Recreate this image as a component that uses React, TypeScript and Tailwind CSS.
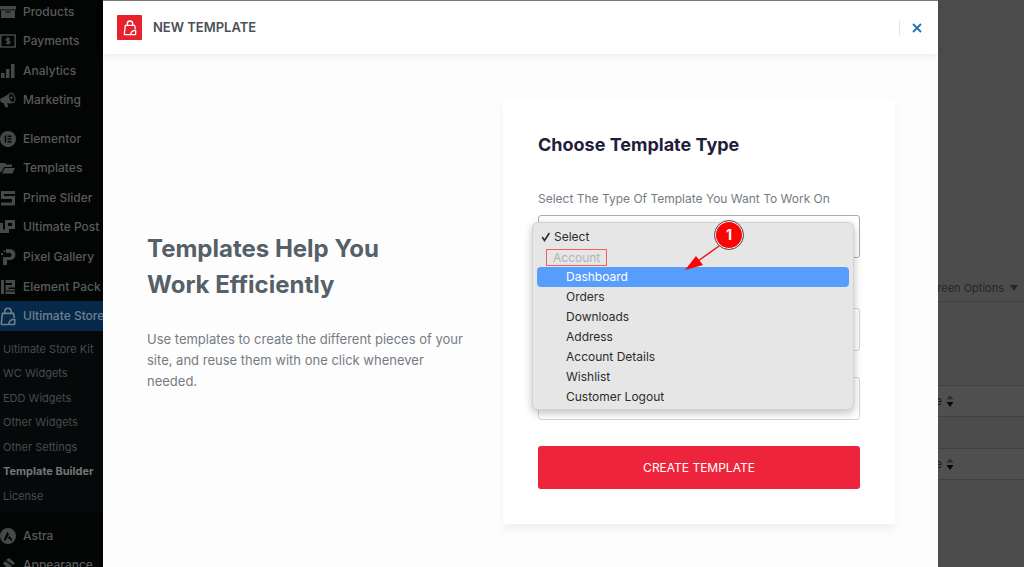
import React, { useState } from "react";
import clsx from "clsx";

type IconProps = { className?: string };

const BagIcon = ({ className }: IconProps) => (
  <svg viewBox="0 0 20 24" className={className} fill="none" stroke="currentColor" strokeWidth="2" strokeLinejoin="round" strokeLinecap="round">
    <path d="M6 8V5.500a4 4 0 0 1 8 0V8" />
    <path d="M10 22H2.500a1 1 0 0 1-1-1.100L3 8h14l.9 5" />
    <path d="M18.500 15.500V21a1 1 0 0 1-1 1H11c.3-4 3-6.500 7.500-6.500Z" />
  </svg>
);

const icons: Record<string, React.ReactNode> = {
  products: <path d="M0 2h16v3.500H0zM1 6.300h14V14H1zm4.500 1.200v1h5v-1z" fillRule="evenodd" />,
  payments: (
    <g fill="none" stroke="currentColor" strokeWidth="1.500">
      <path d="M.8 2h14.400v12H.8z" />
      <path d="M10 6.200C9.500 5.500 6.200 5.200 6.200 6.800S10 7.800 10 9.300 6.500 10.800 6 9.800M8 4.300v7.400" />
    </g>
  ),
  analytics: <path d="M1 10h3.500v5H1zM6 6h3.500v9H6zM11 1h3.500v14H11z" />,
  marketing: (
    <>
      <path d="M0 7l9-5c-1 4 0 7 3 9.500L7 11.300 8.500 15l-3 .5L3.500 11 1 10.500z" />
      <ellipse cx="11.800" cy="5.800" rx="3" ry="4.800" transform="rotate(-18 11.800 5.800)" fill="none" stroke="currentColor" strokeWidth="1.200" />
      <circle cx="11.500" cy="5.800" r="1.200" />
    </>
  ),
  elementor: <path fillRule="evenodd" d="M8 0a8 8 0 1 0 0 16A8 8 0 0 0 8 0zM4.700 4.500h1.500v7H4.700zM7.500 4.500h4V6h-4zM7.500 7.300h4v1.400h-4zM7.500 10h4v1.500h-4z" />,
  templates: <path d="M0 3h5l1.500 1.500H12V7H4L1.500 12H0zM4.800 8H15l-2.500 5.500H2z" />,
  prime: <path d="M1 1h14v3H4v2h11v9.500H1v-3h11V9H1z" fillRule="evenodd" />,
  post: <path fillRule="evenodd" d="M0 4h3v6.500h2V1h10v9H9v4H0zM8 4v3h4V4z" />,
  pixel: <path fillRule="evenodd" d="M6 0h4a5 5 0 0 1 0 11H7v5H3V8h6.500a1.800 1.800 0 0 0 0-4H6zM1 4h2v2H1zM3.500 1.500h1.800v1.800H3.500z" />,
  pack: <path d="M1 1h3v14H1zM5.500 1H15v7.500H8.500V10H15v1.500H5.500V6H12V4H5.500zM5.500 12.500H15V15H5.500z" />,
  astra: <path fillRule="evenodd" d="M8 0a8 8 0 1 0 0 16A8 8 0 0 0 8 0zM7.300 3.500 9 6.500 5.500 12.500h-2zM9.500 7.500l3 5h-2l-1-1.800H7.500z" />,
  appearance: <path d="M9 1l6 5-2 2-7-5zM5 4l7 5-3 1.500L5 15 2 13l4-4-3-2z" />,
};

const MenuIcon = ({ name }: { name: string }) =>
  name === "store" ? (
    <BagIcon className="h-[19px] w-4 shrink-0" />
  ) : (
    <svg viewBox="0 0 16 16" className="size-4 shrink-0 opacity-80" fill="currentColor">
      {icons[name]}
    </svg>
  );

const shopMenu = [
  { icon: "products", label: "Products" },
  { icon: "payments", label: "Payments" },
  { icon: "analytics", label: "Analytics" },
  { icon: "marketing", label: "Marketing" },
];

const pluginMenu = [
  { icon: "elementor", label: "Elementor" },
  { icon: "templates", label: "Templates" },
  { icon: "prime", label: "Prime Slider" },
  { icon: "post", label: "Ultimate Post" },
  { icon: "pixel", label: "Pixel Gallery" },
  { icon: "pack", label: "Element Pack" },
  { icon: "store", label: "Ultimate Store", active: true },
];

const themeMenu = [
  { icon: "astra", label: "Astra" },
  { icon: "appearance", label: "Appearance" },
];

const subMenu = ["Ultimate Store Kit", "WC Widgets", "EDD Widgets", "Other Widgets", "Other Settings", "Template Builder", "License"];

const accountTypes = ["Dashboard", "Orders", "Downloads", "Address", "Account Details", "Wishlist", "Customer Logout"];

type Item = { icon: string; label: string; active?: boolean };

const MenuGroup = ({ items, className }: { items: Item[]; className: string }) => (
  <ul className={clsx("grid auto-rows-fr", className)}>
    {items.map((item) => (
      <li key={item.label} className={clsx("flex", item.active ? "bg-[#06294a] text-[#6f7f8e]" : "text-[#595b5b]")}>
        <a href="#" className="flex items-center gap-[7px] whitespace-nowrap text-xs font-medium">
          <MenuIcon name={item.icon} />
          {item.label}
        </a>
      </li>
    ))}
  </ul>
);

const Sidebar = () => (
  <aside className="w-[103px] shrink-0 overflow-hidden bg-[#030504]">
    <nav className="-mt-[3px]">
      <MenuGroup items={shopMenu} className="h-[118px]" />
      <MenuGroup items={pluginMenu} className="mt-[9px] h-[207px]" />
      <ul className="grid h-[181px] auto-rows-fr bg-[#05090a] pt-1.5 pb-1 pl-[3px]">
        {subMenu.map((label) => (
          <li key={label} className="flex items-center">
            <a
              href="#"
              className={clsx("whitespace-nowrap text-[11px]", label === "Template Builder" ? "font-bold text-[#747676]" : "text-[#474b4c]")}
            >
              {label}
            </a>
          </li>
        ))}
      </ul>
      <MenuGroup items={themeMenu} className="mt-[9px] h-[59px]" />
    </nav>
  </aside>
);

const SortRow = () => (
  <div className="flex h-8 items-center gap-1 border-y border-[#414141] bg-[#505050] pl-[811px] text-xs text-[#1d1d1d]">
    <span>Type</span>
    <svg viewBox="0 0 8 14" className="h-3.5 w-2">
      <path d="M4 1l3.500 4.500h-7z" fill="#2e2e2e" />
      <path d="M4 13 .5 8h7z" fill="#080808" />
    </svg>
  </div>
);

const AdminPage = () => (
  <main className="flex-1 overflow-hidden bg-[#4c4c4c] pt-[278px]">
    <div className="flex justify-end border-b border-[#414141] pr-1.5 pb-[3px]">
      <button className="flex items-center gap-1.5 text-[11px] leading-5 text-[#262626]">
        Screen Options
        <svg viewBox="0 0 8 6" className="h-1.5 w-2">
          <path d="M0 0h8L4 6z" fill="currentColor" />
        </svg>
      </button>
    </div>
    <div className="mt-[83px] flex flex-col gap-[31px]">
      <SortRow />
      <SortRow />
    </div>
  </main>
);

const TypeMenu = ({ value, onPick }: { value: string; onPick: (v: string) => void }) => (
  <div className="absolute top-[7px] right-[6px] -left-[6px] rounded-md border border-[#d2d2d2] bg-[#e6e6e6] px-1 pt-1 pb-0.5 text-xs text-[#2c2c2c] shadow-[0_3px_8px_rgba(0,0,0,0.25)]">
    <ul role="listbox" aria-label="Template type">
      <li role="option" aria-selected="false" className="flex h-5 items-center gap-0.5 pl-[3px]">
        <svg viewBox="0 0 12 12" className="size-3" fill="none" stroke="currentColor" strokeWidth="1.600" strokeLinecap="round">
          <path d="M2.500 6.500 4.500 9.500 9 2.500" />
        </svg>
        Select
      </li>
      <li className="flex h-5 items-center pl-[9px] text-[#b3b3b3]">
        <span className="border border-[#f0605c] px-1.5 leading-[15px]">Account</span>
      </li>
      {accountTypes.map((type) => (
        <li
          key={type}
          role="option"
          aria-selected={type === value}
          onClick={() => onPick(type)}
          className={clsx("flex h-5 items-center rounded-sm pl-[29px]", type === value && "bg-[#579efc] text-white")}
        >
          {type}
        </li>
      ))}
    </ul>
    <svg viewBox="0 0 36 26" className="absolute top-[22px] left-[151px] h-[26px] w-9">
      <path d="M35 1 14 16" stroke="#f01414" strokeWidth="1.500" />
      <path d="M1 25 12 11l7 9z" fill="#fb0406" />
    </svg>
    <span className="absolute -top-[3px] left-[181px] flex size-[30px] items-center justify-center rounded-full border border-[#5d5d5d] bg-[#fb0406] text-sm font-bold text-white ring-1 ring-white ring-inset">
      1
    </span>
  </div>
);

export default function App() {
  const [type, setType] = useState("Dashboard");

  return (
    <div className="relative flex h-screen overflow-hidden bg-[#4c4c4c] font-['Inter',sans-serif]">
      <Sidebar />
      <AdminPage />

      <div className="absolute inset-0 flex pr-[86px] pl-[103px]">
        <div role="dialog" aria-label="New Template" className="flex flex-1 flex-col border-t border-[#7a7a7a] bg-[#fdfdfd]">
          <header className="flex h-[53px] shrink-0 items-center bg-white pr-4 pl-3.5 shadow-[0_1px_8px_rgba(0,0,0,0.09)]">
            <span className="flex size-[25px] items-center justify-center rounded-[1px] bg-[#e9202e] text-white">
              <BagIcon className="h-4 w-3.5" />
            </span>
            <h1 className="ml-[11px] text-[13px] font-semibold text-[#4a5157]">NEW TEMPLATE</h1>
            <div className="ml-auto flex h-4 items-center border-l border-[#e6e6e6] pl-3">
              <button aria-label="Close" className="text-[#2271b1]">
                <svg viewBox="0 0 10 10" className="size-2.5" stroke="currentColor" strokeWidth="1.800">
                  <path d="M1 1l8 8M9 1 1 9" />
                </svg>
              </button>
            </div>
          </header>

          <div className="grid grid-cols-[minmax(0,1fr)_392px] items-center pt-[46px] pr-[43px] pl-11">
            <section className="pr-9 pb-0.5">
              <h2 className="text-2xl leading-9 font-bold text-[#556068]">
                Templates Help You
                <br />
                Work Efficiently
              </h2>
              <p className="mt-[26px] text-[13px] leading-[21px] text-[#757c83]">
                Use templates to create the different pieces of your site, and reuse them with one click whenever needed.
              </p>
            </section>

            <form className="bg-white px-[35px] pt-[33px] pb-[35px] shadow-[0_6px_8px_rgba(0,0,0,0.05)]" onSubmit={(e) => e.preventDefault()}>
              <h2 className="text-lg leading-6 font-bold text-[#1e1e3a]">Choose Template Type</h2>
              <label htmlFor="template-type" className="mt-8 block text-xs leading-5 text-[#757c83]">
                Select The Type Of Template You Want To Work On
              </label>
              <div className="relative mt-1.5">
                <select id="template-type" className="block h-[43px] w-full appearance-none rounded-[3px] border border-[#a9adb1] bg-white px-3 text-xs">
                  <option>Select</option>
                </select>
                <TypeMenu value={type} onPick={setType} />
              </div>
              <input aria-label="Template name" className="mt-[50px] block h-[43px] w-full rounded-[3px] border border-[#d3d5d7] px-3 text-xs" />
              <input aria-label="Template status" className="mt-[26px] block h-[43px] w-full rounded-[3px] border border-[#d3d5d7] px-3 text-xs" />
              <button type="submit" className="mt-[26px] h-[43px] w-full rounded-[3px] bg-[#ee243d] text-xs text-white">
                CREATE TEMPLATE
              </button>
            </form>
          </div>
        </div>
      </div>
    </div>
  );
}
